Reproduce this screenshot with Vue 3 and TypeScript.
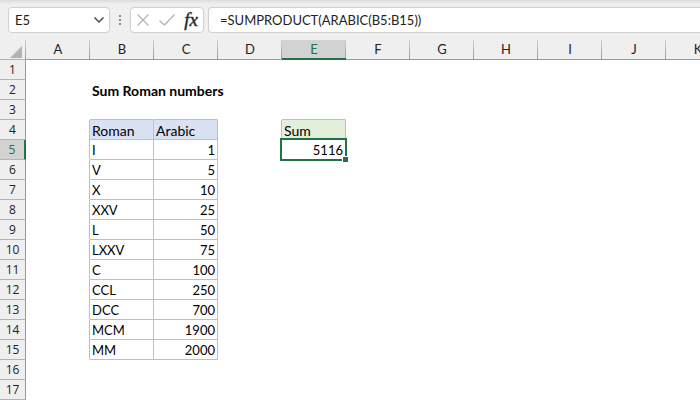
<script setup lang="ts">
import { ref } from 'vue'

interface Cell {
  text: string
  kind: string
}

const columns: string[] = ['A', 'B', 'C', 'D', 'E', 'F', 'G', 'H', 'I', 'J', 'K']
const rowCount = 17
const active = { column: 'E', row: 5 }

const nameBox = ref('E5')
const formula = ref('=SUMPRODUCT(ARABIC(B5:B15))')

const data: [string, number][] = [
  ['I', 1],
  ['V', 5],
  ['X', 10],
  ['XXV', 25],
  ['L', 50],
  ['LXXV', 75],
  ['C', 100],
  ['CCL', 250],
  ['DCC', 700],
  ['MCM', 1900],
  ['MM', 2000],
]

const cells: Record<string, Cell> = {
  B2: { text: 'Sum Roman numbers', kind: 'title' },
  A4: { text: '', kind: 'edge-right' },
  B3: { text: '', kind: 'edge-bottom' },
  C3: { text: '', kind: 'edge-bottom' },
  E3: { text: '', kind: 'edge-bottom' },
  D4: { text: '', kind: 'edge-right' },
  B4: { text: 'Roman', kind: 'boxed label blue' },
  C4: { text: 'Arabic', kind: 'boxed label blue' },
  E4: { text: 'Sum', kind: 'boxed label green' },
  E5: {
    text: String(data.reduce((total, [, value]) => total + value, 0)),
    kind: 'boxed number',
  },
}

data.forEach(([roman, arabic], i) => {
  const row = i + 5
  cells[`A${row}`] = { text: '', kind: 'edge-right' }
  cells[`B${row}`] = { text: roman, kind: 'boxed' }
  cells[`C${row}`] = { text: String(arabic), kind: 'boxed number' }
})
</script>

<template>
  <main class="app">
    <header class="bar">
      <div class="field name-field">
        <input v-model="nameBox" class="entry" type="text" aria-label="Name box" />
        <button class="icon-button" type="button" aria-label="Show names">
          <svg width="12" height="8" viewBox="0 0 12 8">
            <path d="M1.5 1.5 L6 6 L10.5 1.5" fill="none" stroke="#4a4a4a" stroke-width="1.5" />
          </svg>
        </button>
      </div>
      <svg class="dots" width="4" height="12" viewBox="0 0 4 12" aria-hidden="true">
        <path d="M1 1h2v2H1zM1 5h2v2H1zM1 9h2v2H1z" fill="#8c8c8c" />
      </svg>
      <div class="field tools">
        <button class="icon-button" type="button" aria-label="Cancel">
          <svg width="14" height="14" viewBox="0 0 14 14">
            <path d="M1.5 1.5 L12.5 12.5 M12.5 1.5 L1.5 12.5" fill="none" stroke="#b4b4b4" stroke-width="1.2" />
          </svg>
        </button>
        <button class="icon-button" type="button" aria-label="Enter">
          <svg width="18" height="14" viewBox="0 0 18 14">
            <path d="M1.5 7.5 L6.5 12 L16.5 1.5" fill="none" stroke="#b4b4b4" stroke-width="1.3" />
          </svg>
        </button>
        <button class="icon-button fx" type="button" aria-label="Insert function"><i>fx</i></button>
      </div>
      <div class="field formula-field">
        <input v-model="formula" class="entry" type="text" aria-label="Formula" spellcheck="false" />
      </div>
    </header>

    <div class="sheet">
      <table class="grid">
        <colgroup>
          <col class="row-col" />
          <col v-for="column in columns" :key="column" class="data-col" />
        </colgroup>
        <thead>
          <tr>
            <td class="corner">
              <svg width="12" height="12" viewBox="0 0 12 12" aria-hidden="true">
                <path d="M12 0V12H0z" fill="#b3b3b3" />
              </svg>
            </td>
            <th
              v-for="column in columns"
              :key="column"
              scope="col"
              class="column-head"
              :class="{ selected: column === active.column }"
            >
              {{ column }}
            </th>
          </tr>
        </thead>
        <tbody>
          <tr v-for="row in rowCount" :key="row">
            <th scope="row" class="row-head" :class="{ selected: row === active.row }">{{ row }}</th>
            <td v-for="column in columns" :key="column" class="cell" :class="cells[column + row]?.kind">
              {{ cells[column + row]?.text }}
              <span v-if="column === active.column && row === active.row" class="selection"></span>
            </td>
          </tr>
        </tbody>
      </table>
    </div>
  </main>
</template>

<style>
body {
  margin: 0;
  background: #fff;
}
</style>

<style scoped>
.app {
  overflow: hidden;
  font-family: Lato, "Liberation Sans", sans-serif;
  font-size: 13px;
  color: #000;
}

.bar {
  display: flex;
  align-items: center;
  padding: 7px 0 7px 8px;
  background: linear-gradient(#dcdcdc, #efefef 4px);
}

.field {
  box-sizing: border-box;
  display: flex;
  align-items: center;
  height: 26px;
  border: 1px solid #d0d0d0;
  border-radius: 4px;
  background: #fff;
}

.name-field {
  flex: none;
  width: 102px;
  padding: 0 4px 0 6px;
}

.entry {
  flex: 1;
  min-width: 0;
  height: 22px;
  padding: 0;
  border: 0;
  outline: 0;
  background: transparent;
  font: inherit;
  color: #222;
}

.icon-button {
  display: flex;
  align-items: center;
  justify-content: center;
  height: 22px;
  padding: 0;
  border: 0;
  background: transparent;
  color: #222;
}

.dots {
  flex: none;
  margin: 0 8px;
}

.tools {
  flex: none;
  justify-content: space-between;
  width: 74px;
  padding: 0 5px;
}

.fx {
  font-family: "Liberation Serif", serif;
  font-size: 19px;
  -webkit-text-stroke: 1px rgba(34, 34, 34, 0.4);
}

.formula-field {
  flex: 1;
  margin-left: 4px;
  padding-left: 11px;
  border-right: 0;
  border-radius: 4px 0 0 4px;
}

.sheet {
  overflow: hidden;
}

.grid {
  width: 730px;
  table-layout: fixed;
  border-collapse: separate;
  border-spacing: 0;
}

.row-col {
  width: 26px;
}

.data-col {
  width: 64px;
}

.grid th,
.grid td {
  box-sizing: border-box;
  height: 20px;
  padding: 0;
  line-height: 19px;
  white-space: nowrap;
}

.grid .corner {
  border-bottom: 1px solid #b4b4b4;
  background: linear-gradient(#d0d0d0, #999) right / 1px 100% no-repeat #efefef;
}

.corner svg {
  display: block;
  margin: 4px 4px 0 auto;
}

.grid .column-head {
  border-bottom: 1px solid #999;
  background: linear-gradient(#d0d0d0, #999) right / 1px 100% no-repeat #efefef;
  font-weight: normal;
  color: #222;
}

.grid .column-head.selected {
  border-bottom: 2px solid #217346;
  background-color: #d2d2d2;
  line-height: 18px;
  color: #217346;
}

.grid .row-head {
  padding-top: 1px;
  border-right: 1px solid #999;
  border-bottom: 1px solid #b4b4b4;
  background: #efefef;
  font-family: "Open Sans", "Noto Sans", sans-serif;
  font-size: 12px;
  font-weight: normal;
  line-height: 18px;
  color: #222;
}

.grid .row-head.selected {
  border-right: 2px solid #217346;
  background: #d2d2d2;
  color: #217346;
}

.grid .cell {
  position: relative;
  padding: 2px 2px 0;
  border-right: 1px solid transparent;
  border-bottom: 1px solid transparent;
  line-height: 17px;
}

.grid .title {
  font-size: 14px;
  font-weight: bold;
}

.grid .label {
  font-size: 14px;
}

.grid .edge-right {
  border-right-color: #bfbfbf;
}

.grid .edge-bottom {
  border-bottom-color: #bfbfbf;
}

.grid .boxed {
  border-color: #bfbfbf;
}

.grid .blue {
  background: #d9e1f2;
}

.grid .green {
  background: #e2efda;
}

.grid .number {
  text-align: right;
}

.selection {
  position: absolute;
  inset: -2px;
  border: 2px solid #217346;
}

.selection::after {
  content: "";
  position: absolute;
  right: -3px;
  bottom: -3px;
  width: 5px;
  height: 5px;
  border-top: 1px solid #fff;
  border-left: 1px solid #fff;
  background: #217346;
}
</style>
